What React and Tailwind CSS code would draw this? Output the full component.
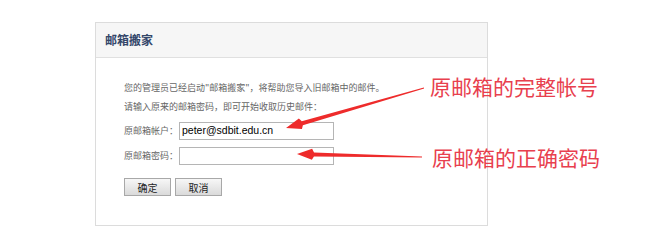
import React from 'react';

const cjk = { fontFamily: '"Noto Sans CJK SC", "Noto Sans", sans-serif' };

function Arrow({ x1, y1, x2, y2 }) {
  // tapered shaft from tail (x1,y1) to head tip (x2,y2)
  const dx = x2 - x1;
  const dy = y2 - y1;
  const len = Math.hypot(dx, dy);
  const ux = dx / len;
  const uy = dy / len;
  const nx = -uy;
  const ny = ux;
  const headLen = 17;
  const headW = 5.5;
  const bx = x2 - ux * headLen;
  const by = y2 - uy * headLen;
  const pts = [
    [x1 + nx * 0.5, y1 + ny * 0.5],
    [bx + nx * 2, by + ny * 2],
    [bx + ux * 2 + nx * headW, by + uy * 2 + ny * headW],
    [x2, y2],
    [bx + ux * 2 - nx * headW, by + uy * 2 - ny * headW],
    [bx - nx * 2, by - ny * 2],
    [x1 - nx * 0.5, y1 - ny * 0.5],
  ];
  return <polygon points={pts.map((p) => p.join(',')).join(' ')} fill="#ee2b2b" />;
}

export default function App() {
  return (
    <div className="relative w-[647px] h-[245px] bg-white overflow-hidden" style={cjk}>
      <div className="pt-[22px] pl-[95px]">
        <div className="w-[393px] h-[204px] border border-[#dcdcdc] bg-white">
          <div className="h-[35px] bg-[#f6f6f6] border-b border-[#e0e0e0] flex items-center px-[9px]">
            <span className="text-[12px] font-bold text-[#34476a]">邮箱搬家</span>
          </div>
          <div className="pl-[28px] pt-[20px] text-[9px] text-[#666]">
            <p className="leading-[19px]">您的管理员已经启动"邮箱搬家"，将帮助您导入旧邮箱中的邮件。</p>
            <p className="leading-[19px]">请输入原来的邮箱密码，即可开始收取历史邮件：</p>
            <div className="flex items-center mt-[6px]">
              <span className="w-[55px]">原邮箱帐户：</span>
              <div
                className="w-[155px] h-[18px] border border-[#b5b5b5] bg-white flex items-center px-[2px] text-[10.5px] text-black"
                style={{ fontFamily: '"Liberation Sans", Arial, sans-serif' }}
              >
                peter@sdbit.edu.cn
              </div>
            </div>
            <div className="flex items-center mt-[7px]">
              <span className="w-[55px]">原邮箱密码：</span>
              <div className="w-[155px] h-[18px] border border-[#b5b5b5] bg-white" />
            </div>
            <div className="flex gap-[4px] mt-[13px]">
              <button className="w-[47px] h-[18px] border border-[#a8a8a8] bg-gradient-to-b from-[#f7f7f7] to-[#dadada] text-[10px] text-[#222]">
                确定
              </button>
              <button className="w-[47px] h-[18px] border border-[#a8a8a8] bg-gradient-to-b from-[#f7f7f7] to-[#dadada] text-[10px] text-[#222]">
                取消
              </button>
            </div>
          </div>
        </div>
      </div>

      <svg className="absolute left-0 top-0" width="647" height="245">
        <Arrow x1={424} y1={88} x2={286} y2={128} />
        <Arrow x1={422} y1={157} x2={297} y2={154} />
      </svg>

      <div className="absolute left-[430px] top-[72px] text-[21px] leading-[28px] text-[#e8404e]">原邮箱的完整帐号</div>
      <div className="absolute left-[432px] top-[143px] text-[21px] leading-[28px] text-[#e8404e]">原邮箱的正确密码</div>
    </div>
  );
}
